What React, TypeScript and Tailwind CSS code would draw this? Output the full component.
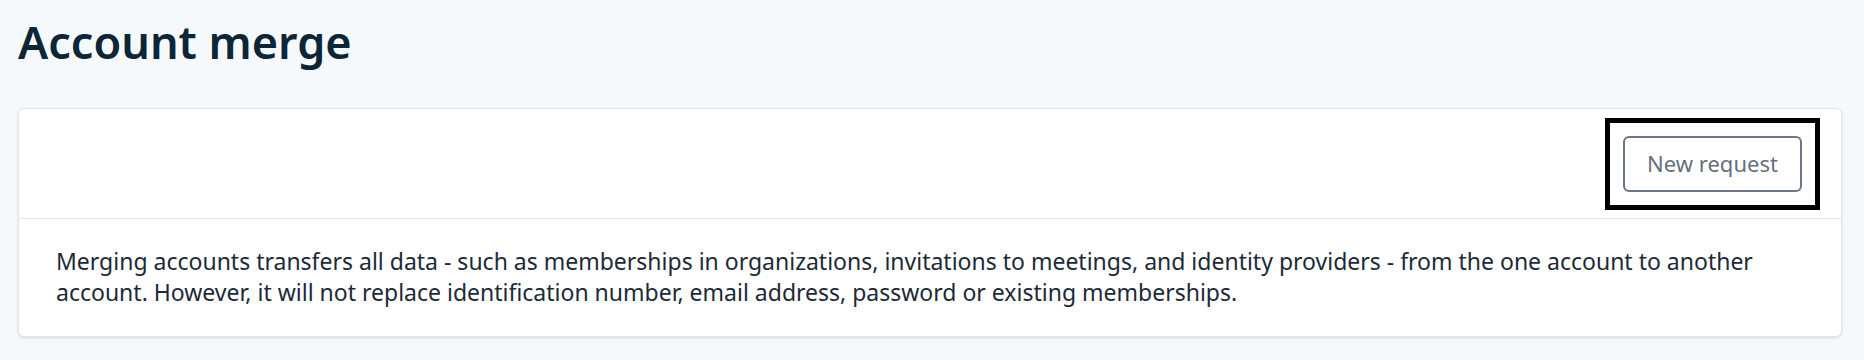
import React from "react";

const App: React.FC = () => (
    <div className="w-[1864px] h-[360px] bg-[#f5f9fc] pl-[18px] pr-[22px] pt-[19px] font-['Noto_Sans',sans-serif]">
        <h1 className="text-[45px] leading-[46px] font-semibold text-[#0c2537]">Account merge</h1>
        <div className="mt-[43px] bg-white border border-[#dfe6ee] rounded-md shadow-sm">
            <div className="h-[110px] flex items-center justify-end pr-[21px] border-b border-[#e2e7ec]">
                <div className="border-[5px] border-black p-[13px]">
                    <button className="h-[56px] w-[179px] border-2 border-[#6b7785] rounded-md text-[22px] text-[#64707d]">
                        New request
                    </button>
                </div>
            </div>
            <p className="px-[37px] pt-[27px] pb-[28px] text-[23px] leading-[31px] text-[#1c2a38]">
                Merging accounts transfers all data - such as memberships in organizations, invitations to meetings, and identity providers - from the one account to another account. However, it will not replace identification number, email address, password or existing memberships.
            </p>
        </div>
    </div>
);

export default App;
